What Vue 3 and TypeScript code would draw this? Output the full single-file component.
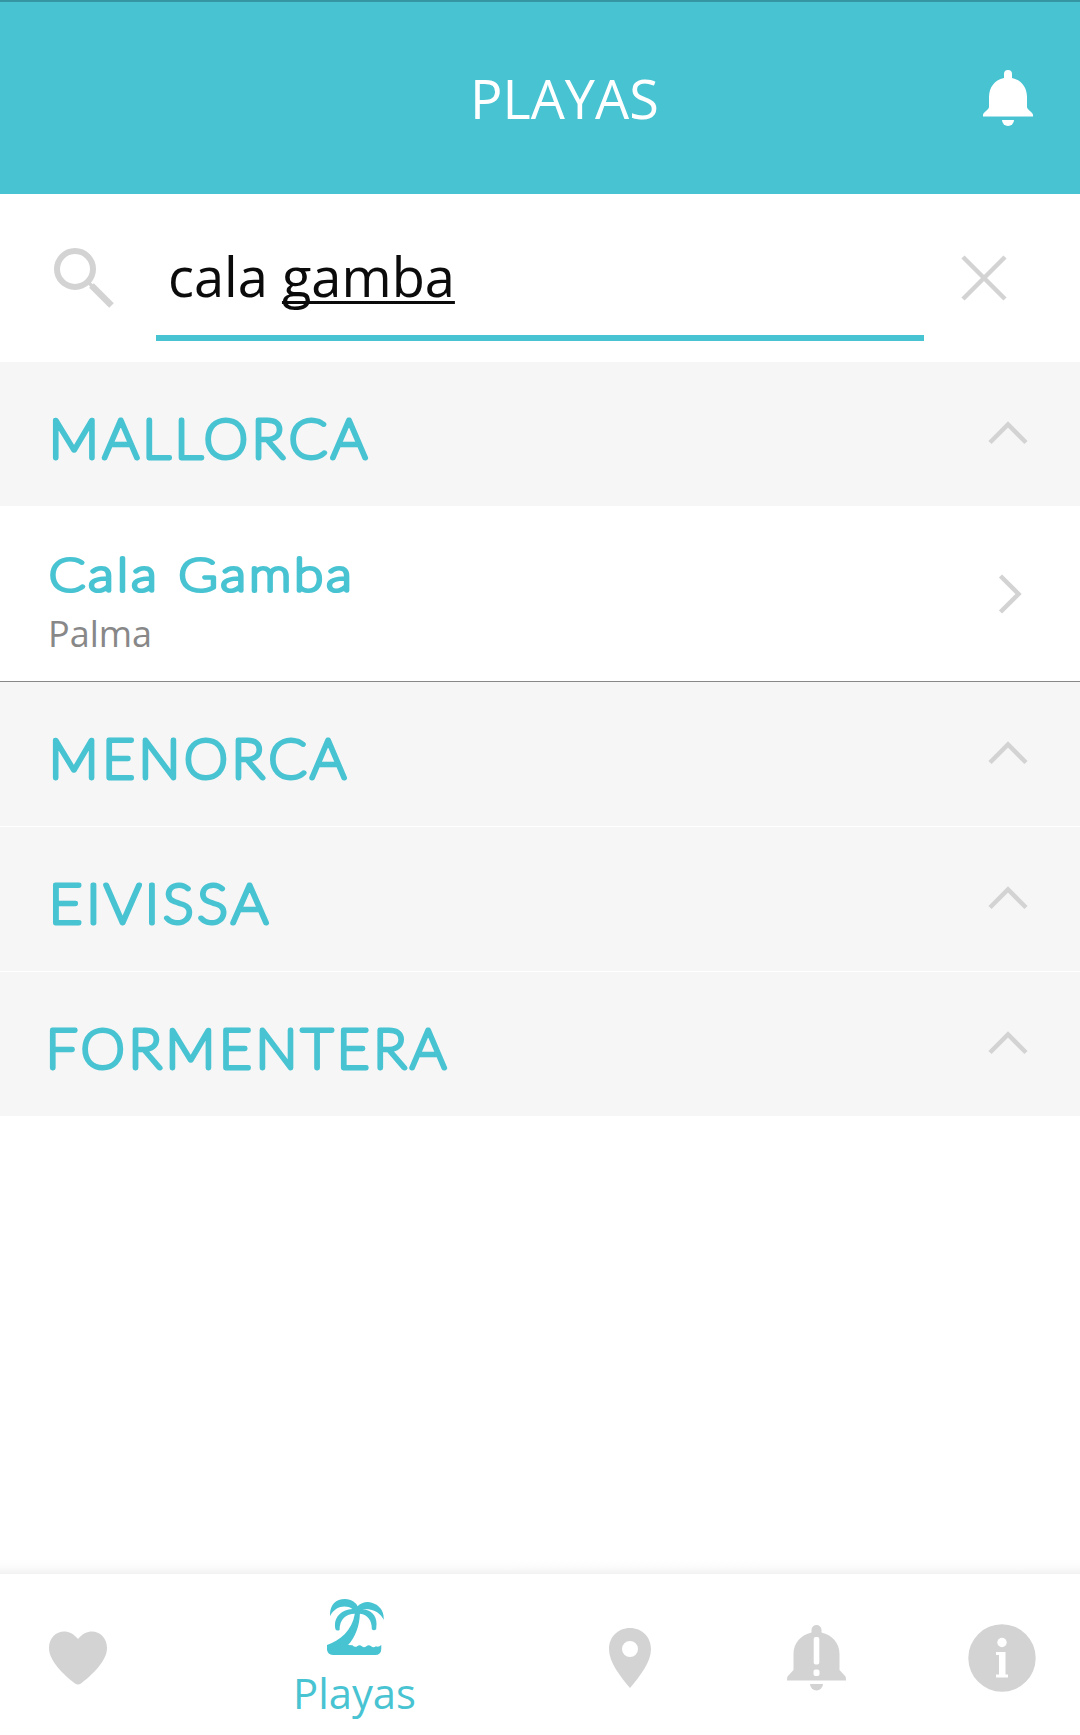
<script setup lang="ts">
import { ref } from 'vue'

interface Beach {
  name: string
  town: string
  length: number
}

interface Island {
  name: string
  x: number
  length: number
  beaches: Beach[]
}

const typed = ref('cala ')
const composing = ref('gamba')

const islands = ref<Island[]>([
  { name: 'MALLORCA', x: 49, length: 322, beaches: [{ name: 'Cala Gamba', town: 'Palma', length: 306 }] },
  { name: 'MENORCA', x: 49, length: 301, beaches: [] },
  { name: 'EIVISSA', x: 49, length: 223, beaches: [] },
  { name: 'FORMENTERA', x: 46, length: 404, beaches: [] },
])
</script>

<template>
  <div class="screen">
    <header class="app-bar">
      <h1>PLAYAS</h1>
      <svg class="bell" viewBox="0 0 50 56">
        <path d="M21 8V4a4 4 0 0 1 8 0v4C39 10 44 18 44 27v10c0 3 6 5 6 8v1.500H0v-1.500c0-3 6-5 6-8V27C6 18 11 10 21 8z" />
        <path d="M19 50h12a6 6 0 0 1-12 0z" />
      </svg>
    </header>

    <div class="search">
      <svg class="lens" viewBox="0 0 60 60">
        <circle cx="21" cy="21" r="18" stroke-width="6" />
        <path d="M37.500 37.500L57.500 57.500" stroke-width="6.500" />
        <path d="M33 33L39 39" stroke-width="3.500" />
      </svg>
      <div class="field"><span class="query">{{ typed }}<u>{{ composing }}</u></span></div>
      <svg class="clear" viewBox="0 0 46 46">
        <path d="M2 2L44 44M44 2L2 44" />
      </svg>
    </div>

    <main>
      <section v-for="island in islands" :key="island.name" class="island">
        <div class="island-head">
          <svg class="rounded" width="500" height="144">
            <text :x="island.x" y="96" :textLength="island.length" lengthAdjust="spacingAndGlyphs">{{ island.name }}</text>
          </svg>
          <svg class="chevron-up" viewBox="0 0 40 24">
            <path d="M2 21.500L20 3.500L38 21.500" />
          </svg>
        </div>
        <div v-for="beach in island.beaches" :key="beach.name" class="beach">
          <div>
            <svg class="rounded small" width="420" height="100">
              <text x="49" y="85" :textLength="beach.length" lengthAdjust="spacingAndGlyphs">{{ beach.name }}</text>
            </svg>
            <p>{{ beach.town }}</p>
          </div>
          <svg class="chevron-right" viewBox="0 0 24 40">
            <path d="M2.500 2L20.500 20L2.500 38" />
          </svg>
        </div>
      </section>
    </main>

    <div class="shade"></div>
    <nav class="tabs">
      <div class="tab">
        <svg width="58" height="54" viewBox="0 0 58 54">
          <path d="M29 8C40-6 58 1 58 17c0 13-15 27-26 35.500q-3 2-6 0C15 44 0 30 0 17 0 1 18-6 29 8z" />
        </svg>
      </div>
      <div class="tab active">
        <svg width="57" height="56" viewBox="201 116 168 168" preserveAspectRatio="none">
          <path d="M210 167C208 135 226 116 254 116C274 117 288 128 291 138C300 128 318 122 333 127C355 133 370 152 368 178C360 160 340 143 305 146C330 148 347 165 347 190L346 207Q339 213 333 207C334 182 322 163 298 160C297 195 285 230 263 254L276 255Q284 263 291 257Q297 252 304 258Q310 264 317 258Q324 252 331 258Q338 264 345 258Q353 262 361 254V266Q360 284 343 284H218Q203 282 201 268V254C240 240 275 210 283 160C258 160 238 175 238 209Q230 213 226 207C218 175 240 148 276 146C255 132 225 138 210 167Z" />
        </svg>
        <span>Playas</span>
      </div>
      <div class="tab">
        <svg width="42" height="60" viewBox="0 0 42 60">
          <path fill-rule="evenodd" d="M21 0C33 0 42 9 42 21c0 13-11 27-21 39C11 48 0 34 0 21 0 9 9 0 21 0zM21 13a8 8 0 1 0 0 16 8 8 0 0 0 0-16z" />
        </svg>
      </div>
      <div class="tab">
        <svg width="59" height="66" viewBox="0 0 59 66">
          <path d="M24.500 7.500V5a5 5 0 0 1 10 0v2.500C45 10 52.500 18 52.500 29v16l6 6.500q.5 1 .5 4H0q0-3 .5-4L6.500 45V29C6.500 18 14 10 24.500 7.500z" />
          <path d="M23 59h13a6.500 6.500 0 0 1-13 0z" />
          <rect class="cut" x="26.700" y="12" width="5.600" height="27.500" rx="2" />
          <rect class="cut" x="26.500" y="44.500" width="6" height="6.500" rx="2" />
        </svg>
      </div>
      <div class="tab">
        <svg width="68" height="68" viewBox="0 0 68 68">
          <circle cx="34" cy="34" r="33.700" />
          <circle class="cut" cx="34" cy="18.500" r="4.700" />
          <path class="cut" d="M28 28h9.500v22.500h2.500v3H28v-3h3V31h-3z" />
        </svg>
      </div>
    </nav>
  </div>
</template>

<style>
body {
  margin: 0;
  background: #fff;
}
</style>

<style scoped>
.screen {
  display: flex;
  flex-direction: column;
  width: 1080px;
  height: 1735px;
  background: #fff;
  font-family: 'Open Sans', sans-serif;
  overflow: hidden;
}

h1,
p {
  margin: 0;
  font-weight: 400;
}

svg {
  display: block;
  flex: none;
}

.app-bar {
  display: flex;
  align-items: center;
  justify-content: space-between;
  box-sizing: border-box;
  height: 194px;
  padding: 0 47px 0 470px;
  border-top: 2px solid #3595a2;
  background: #48c3d2;
  color: #fff;
}

.app-bar h1 {
  font-size: 54px;
  line-height: 74px;
}

.bell {
  width: 50px;
  height: 56px;
  fill: #fff;
}

.search {
  display: flex;
  align-items: flex-start;
  height: 168px;
}

.lens {
  width: 60px;
  height: 60px;
  margin: 54px 42px 0 54px;
  fill: none;
  stroke: #d3d3d3;
}

.field {
  box-sizing: border-box;
  width: 768px;
  height: 147px;
  padding: 45px 12px 0;
  border-bottom: 6px solid #48c3d2;
}

.query {
  color: #0b0b0b;
  font-size: 54.2px;
  line-height: 74px;
  white-space: pre;
}

.query u {
  text-decoration-thickness: 3px;
  text-decoration-skip-ink: none;
  text-underline-offset: 4px;
}

.clear {
  width: 46px;
  height: 46px;
  margin: 61px 0 0 37px;
}

.clear,
.chevron-up,
.chevron-right {
  fill: none;
  stroke: #d3d3d3;
  stroke-width: 4.5;
}

.island + .island {
  margin-top: 1px;
}

.island:first-child + .island {
  margin-top: 0;
}

.island-head {
  display: flex;
  justify-content: space-between;
  box-sizing: border-box;
  height: 144px;
  padding-right: 52px;
  background: #f6f6f6;
}

.rounded {
  fill: #48c3d2;
  stroke: #48c3d2;
  stroke-width: 4.8px;
  stroke-linejoin: round;
  stroke-linecap: round;
  font-family: Lato, sans-serif;
  font-size: 53px;
  font-weight: 100;
  letter-spacing: 4px;
}

.rounded.small {
  stroke-width: 4.2px;
  font-size: 46px;
  letter-spacing: 3px;
}

.chevron-up {
  width: 40px;
  height: 24px;
  margin-top: 59px;
}

.beach {
  display: flex;
  justify-content: space-between;
  box-sizing: border-box;
  height: 176px;
  padding-right: 58px;
  border-bottom: 1px solid #888;
}

.beach p {
  padding-left: 48px;
  margin-top: 3px;
  color: #888;
  font-size: 36px;
  line-height: 49px;
}

.chevron-right {
  width: 24px;
  height: 40px;
  margin-top: 68px;
}

.shade {
  height: 14px;
  margin-top: auto;
  background: linear-gradient(#fff, #fafafa 60%, #f1f1f1);
}

.tabs {
  display: grid;
  grid-template-columns: 156px 398px 152px 220px 152px;
  height: 161px;
  background: #fff;
}

.tab {
  display: flex;
  flex-direction: column;
  align-items: center;
  justify-content: center;
  padding-top: 7px;
  fill: #d3d3d3;
}

.tab.active {
  justify-content: flex-start;
  padding-top: 25px;
  color: #48c3d2;
  fill: #48c3d2;
}

.tab span {
  margin: 9px 1px 0 0;
  font-size: 41.8px;
  line-height: 57px;
}

.cut {
  fill: #fff;
}
</style>
